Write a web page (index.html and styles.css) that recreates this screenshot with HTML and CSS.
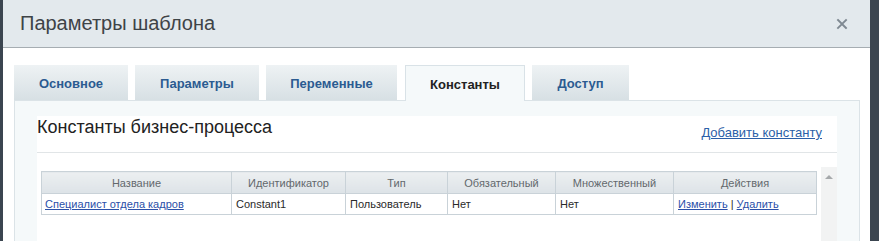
FILE: index.html
```html
<!DOCTYPE html>
<html lang="ru">
<head>
<meta charset="utf-8">
<title>Параметры шаблона</title>
<link rel="stylesheet" href="styles.css">
</head>
<body>
<div class="dialog">
  <div class="header">
    <span class="title">Параметры шаблона</span>
    <span class="close">
      <svg width="12" height="12" viewBox="0 0 12 12"><path d="M2 2 L10 10 M10 2 L2 10" stroke="#7f8992" stroke-width="1.9" stroke-linecap="square"/></svg>
    </span>
  </div>
  <div class="body">
    <div class="tabs">
      <div class="tab t1">Основное</div>
      <div class="tab t2">Параметры</div>
      <div class="tab t3">Переменные</div>
      <div class="tab t4 active">Константы</div>
      <div class="tab t5">Доступ</div>
    </div>
    <div class="panel">
      <div class="sheet">
        <div class="sheet-head">
          <h2 class="heading">Константы бизнес-процесса</h2>
          <a class="add" href="#">Добавить константу</a>
        </div>
        <div class="grid-wrap">
          <table class="grid">
            <colgroup>
              <col class="c1"><col class="c2"><col class="c3"><col class="c4"><col class="c5"><col class="c6">
            </colgroup>
            <thead>
              <tr>
                <th>Название</th><th>Идентификатор</th><th>Тип</th><th>Обязательный</th><th>Множественный</th><th>Действия</th>
              </tr>
            </thead>
            <tbody>
              <tr>
                <td><a href="#">Специалист отдела кадров</a></td>
                <td>Constant1</td>
                <td>Пользователь</td>
                <td>Нет</td>
                <td>Нет</td>
                <td><a href="#">Изменить</a> | <a href="#">Удалить</a></td>
              </tr>
            </tbody>
          </table>
          <div class="scrollbar"><span class="arrow"></span></div>
        </div>
      </div>
    </div>
  </div>
</div>
</body>
</html>
```

FILE: styles.css
```css
html, body {
  margin: 0;
  padding: 0;
}
body {
  width: 879px;
  height: 241px;
  overflow: hidden;
  background: #3b4550;
  font-family: "Liberation Sans", Arial, sans-serif;
}
.dialog {
  margin-left: 3px;
  width: 867px;
  height: 241px;
  background: #ffffff;
  overflow: hidden;
}
.header {
  height: 47px;
  background: #e3e9ed;
  border-bottom: 1px solid #a6adb2;
  display: flex;
  align-items: center;
  justify-content: space-between;
  padding: 0 22px 0 17px;
  box-sizing: content-box;
}
.title {
  font-size: 20px;
  color: #3e4347;
  margin-top: -1px;
}
.close {
  display: flex;
  margin-top: 1px;
}
.body {
  padding: 17px 10px 0 11px;
}
.tabs {
  display: flex;
  gap: 7px;
  height: 35px;
  align-items: stretch;
}
.tab {
  box-sizing: border-box;
  display: flex;
  align-items: center;
  justify-content: center;
  font-size: 13px;
  font-weight: bold;
  color: #2b5b91;
  background: linear-gradient(#eef2f4, #d7e0e4);
  padding-top: 1px;
}
.t1 { width: 114px; }
.t2 { width: 124px; }
.t3 { width: 131px; }
.t4 { width: 120px; margin-left: 1px; }
.t5 { width: 97px; }
.tab.active {
  background: #f5f9fa;
  color: #222222;
  border: 1px solid #d9e2e7;
  border-bottom: none;
  height: 36px;
  position: relative;
  z-index: 1;
}
.panel {
  background: #f5f9fa;
  border: 1px solid #dbe3e7;
  padding: 15px 22px 0 22px;
  height: 200px;
  box-sizing: border-box;
}
.sheet {
  background: #ffffff;
  height: 200px;
}
.sheet-head {
  display: flex;
  justify-content: space-between;
  align-items: flex-start;
  height: 36px;
  border-bottom: 1px solid #e1e5e7;
  padding-right: 15px;
}
.heading {
  margin: 0;
  font-size: 18px;
  font-weight: normal;
  line-height: 22px;
  color: #222222;
}
.add {
  font-size: 13px;
  color: #2b5fa8;
  text-decoration: underline;
  margin-top: 9px;
}
.grid-wrap {
  display: flex;
  gap: 4px;
  padding: 14px 0 0 4px;
  align-items: flex-start;
}
.grid {
  margin-top: 4px;
  width: 775px;
  border-collapse: collapse;
  table-layout: fixed;
  font-size: 11px;
}
.c1 { width: 190px; }
.c2 { width: 114px; }
.c3 { width: 102px; }
.c4 { width: 108px; }
.c5 { width: 118px; }
.c6 { width: 143px; }
.grid th {
  height: 21px;
  padding: 0;
  font-weight: normal;
  color: #63686c;
  background: linear-gradient(#eceff1, #dde3e7);
  border: 1px solid #c9d2d8;
  text-align: center;
}
.grid td {
  height: 20px;
  padding: 0 4px;
  color: #2a2a2a;
  border: 1px solid #c9d2d8;
  white-space: nowrap;
}
.grid td:first-child {
  padding-left: 3px;
}
.grid a {
  color: #2b50a8;
  text-decoration: underline;
}
.scrollbar {
  width: 17px;
  height: 80px;
  background: #f2f3f3;
  display: flex;
  justify-content: center;
  padding-top: 8px;
  box-sizing: border-box;
}
.arrow {
  width: 0;
  height: 0;
  border-left: 4px solid transparent;
  border-right: 4px solid transparent;
  border-bottom: 4px solid #a6a9ab;
}
```
